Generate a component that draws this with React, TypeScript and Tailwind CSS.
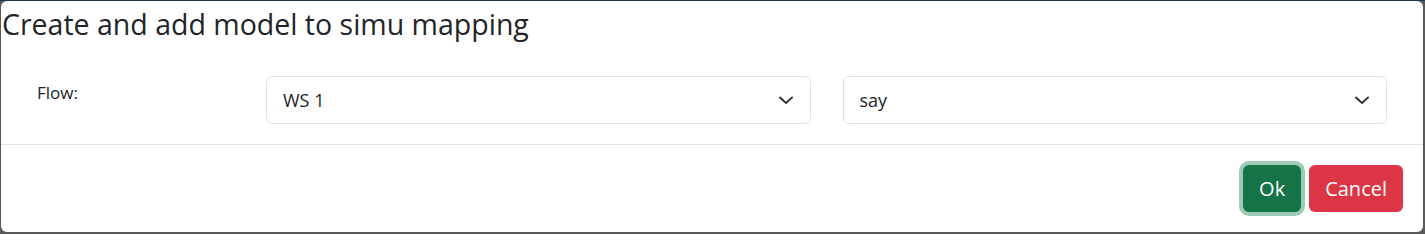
import React from "react"

function Chevron() {
  return (
    <svg width="16" height="12" viewBox="0 0 16 12" className="shrink-0">
      <path d="M2 3.5 8 9 14 3.5" fill="none" stroke="#343a40" strokeWidth="2" strokeLinecap="round" strokeLinejoin="round" />
    </svg>
  )
}

function SelectBox({ value }: { value: string }) {
  return (
    <div className="flex h-12 items-center justify-between rounded-md border border-[#dee2e6] bg-white pl-4 pr-4 text-[18px] text-[#212529]">
      <span>{value}</span>
      <Chevron />
    </div>
  )
}

export default function App() {
  return (
    <div
      className="h-[234px] w-[1425px] border-t border-[#173b4d] bg-[#595959] pb-[2px] pl-[1px] pr-[2px]"
      style={{ fontFamily: '"Open Sans", "Noto Sans", sans-serif' }}
    >
      <div className="flex h-full flex-col rounded-md bg-white">
        {/* header */}
        <div className="h-[50px] pl-[1px] pt-[6px]">
          <h4 className="text-[28.5px] leading-[34px] text-[#212529]">Create and add model to simu mapping</h4>
        </div>

        {/* body */}
        <div className="grid h-[93px] grid-cols-[197px_1fr_1fr] gap-8 px-9 pt-[25px]">
          <label className="pt-[4px] text-[17px] text-[#212529]">Flow:</label>
          <SelectBox value="WS 1" />
          <SelectBox value="say" />
        </div>

        {/* footer */}
        <div className="flex flex-1 items-center justify-end gap-2 border-t border-[#dee2e6] pr-5">
          <button className="h-[47px] rounded-md bg-[#157347] px-4 text-[20px] text-white shadow-[0_0_0_4px_rgba(60,153,110,0.5)]">
            Ok
          </button>
          <button className="h-[47px] rounded-md bg-[#dc3545] px-4 text-[20px] text-white">Cancel</button>
        </div>
      </div>
    </div>
  )
}
